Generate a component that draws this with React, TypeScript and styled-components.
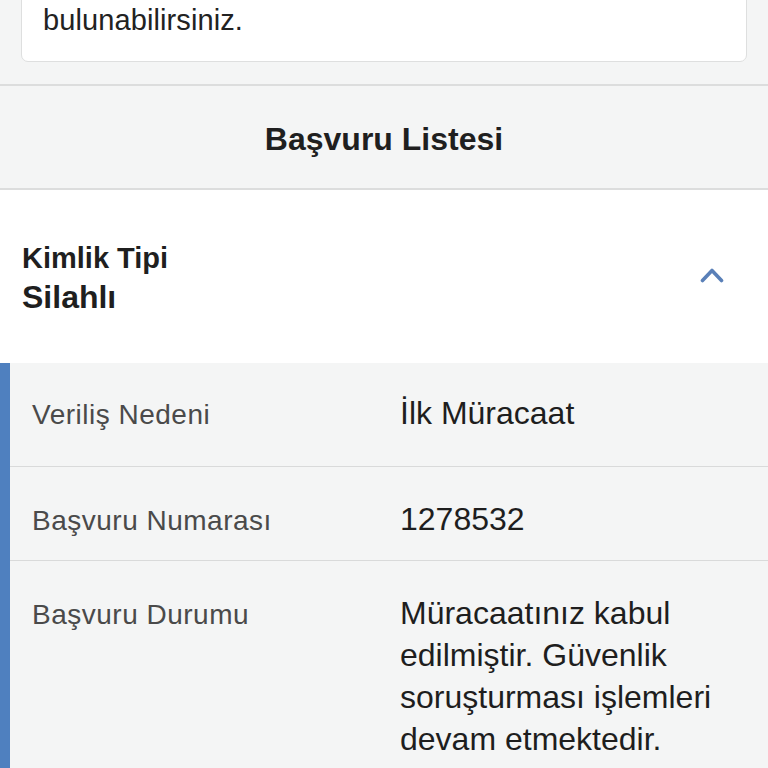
import React from "react";
import styled, { createGlobalStyle } from "styled-components";

const Global = createGlobalStyle`
  html, body {
    margin: 0;
    padding: 0;
    background: #f4f5f5;
    font-family: "Liberation Sans", Arial, Helvetica, sans-serif;
    color: #222;
    overflow: hidden;
  }
  * { box-sizing: border-box; }
`;

const Page = styled.div`
  display: flex;
  flex-direction: column;
  width: 768px;
`;

const InfoCard = styled.div`
  margin: -21px 21px 22px;
  background: #fff;
  border: 1px solid #dedfdf;
  border-radius: 7px;
  padding: 20px 21px 21px;
  font-size: 29px;
  letter-spacing: 0.1px;
  line-height: 40px;
  color: #222;
`;

const SectionHeader = styled.div`
  border-top: 2px solid #dcdddd;
  border-bottom: 2px solid #dcdddd;
  background: #f4f5f5;
  padding-top: 4px;
  text-align: center;
  font-size: 32px;
  font-weight: 700;
  line-height: 98px;
  color: #1f1f1f;
`;

const AccordionHead = styled.div`
  background: #fff;
  display: flex;
  align-items: center;
  justify-content: space-between;
  padding: 51px 44px 44px 22px;
`;

const HeadText = styled.div`
  display: flex;
  flex-direction: column;
  font-weight: 700;
  color: #1f1f1f;
`;

const HeadLabel = styled.span`
  font-size: 29px;
  line-height: 34px;
`;

const HeadValue = styled.span`
  font-size: 32px;
  line-height: 44px;
`;

const Chevron = styled.svg`
  width: 24px;
  height: 16px;
  margin-bottom: 10px;
`;

const Details = styled.div`
  background: #f4f5f5;
  border-left: 10px solid #4f80bf;
  display: flex;
  flex-direction: column;
`;

const Row = styled.div<{ $first?: boolean }>`
  display: grid;
  grid-template-columns: 368px 1fr;
  align-items: baseline;
  padding: ${(p) => (p.$first ? "29px 28px 30px 22px" : "31px 28px 18px 22px")};
  border-bottom: 1px solid #d9dada;
`;

const Label = styled.div`
  font-size: 28px;
  letter-spacing: 0.5px;
  line-height: 42px;
  color: #4a4a4a;
`;

const Value = styled.div`
  font-size: 32px;
  line-height: 42px;
  color: #1e1e1e;
`;

const rows = [
  { label: "Veriliş Nedeni", value: "İlk Müracaat" },
  { label: "Başvuru Numarası", value: "1278532" },
  {
    label: "Başvuru Durumu",
    value:
      "Müracaatınız kabul edilmiştir. Güvenlik soruşturması işlemleri devam etmektedir.",
  },
];

export default function App() {
  return (
    <>
      <Global />
      <Page>
        <InfoCard>bulunabilirsiniz.</InfoCard>
        <SectionHeader>Başvuru Listesi</SectionHeader>
        <AccordionHead>
          <HeadText>
            <HeadLabel>Kimlik Tipi</HeadLabel>
            <HeadValue>Silahlı</HeadValue>
          </HeadText>
          <Chevron viewBox="0 0 24 16">
            <polyline
              points="2.5,13.5 12,3.5 21.5,13.5"
              fill="none"
              stroke="#5a80b8"
              strokeWidth="3.6"
              strokeLinecap="round"
              strokeLinejoin="round"
            />
          </Chevron>
        </AccordionHead>
        <Details>
          {rows.map((r, i) => (
            <Row key={r.label} $first={i === 0}>
              <Label>{r.label}</Label>
              <Value>{r.value}</Value>
            </Row>
          ))}
        </Details>
      </Page>
    </>
  );
}
